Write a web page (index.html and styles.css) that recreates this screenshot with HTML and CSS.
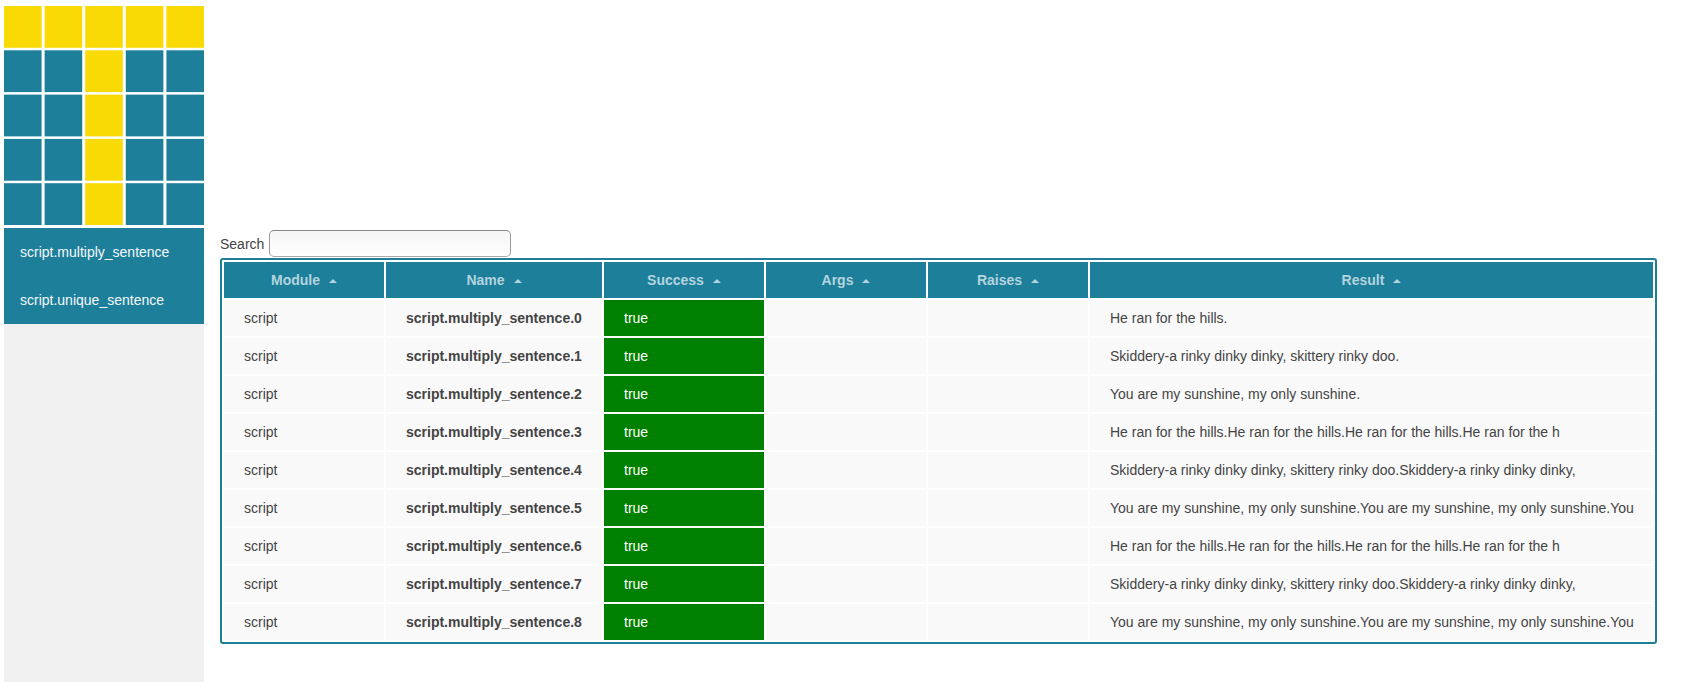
FILE: index.html
```
<!DOCTYPE html>
<html lang="en">
<head>
<meta charset="utf-8">
<title>Test results</title>
<link rel="stylesheet" href="styles.css">
</head>
<body>
<div class="page">
  <aside class="sidebar">
    <svg class="logo" width="200" height="219" viewBox="0 0 200 219" aria-hidden="true">
      <defs>
        <g id="row"><rect width="37.6" height="41.8"/><rect x="40.6" width="37.6" height="41.8"/><rect x="81.2" width="37.6" height="41.8"/><rect x="121.8" width="37.6" height="41.8"/><rect x="162.4" width="37.6" height="41.8"/></g>
        <g id="split"><g class="teal"><rect width="37.6" height="41.8"/><rect x="40.6" width="37.6" height="41.8"/><rect x="121.8" width="37.6" height="41.8"/><rect x="162.4" width="37.6" height="41.8"/></g><rect class="yellow" x="81.2" width="37.6" height="41.8"/></g>
      </defs>
      <use href="#row" class="yellow"/>
      <use href="#split" y="44.3"/>
      <use href="#split" y="88.6"/>
      <use href="#split" y="132.9"/>
      <use href="#split" y="177.2"/>
    </svg>
    <nav class="menu">
      <a class="menu-item">script.multiply_sentence</a>
      <a class="menu-item">script.unique_sentence</a>
    </nav>
  </aside>
  <main class="content">
    <div class="search"><label for="search">Search</label><input class="search-input" id="search" type="text"></div>
    <table class="results">
      <colgroup><col class="c-std"><col class="c-name"><col class="c-std"><col class="c-std"><col class="c-std"><col></colgroup>
      <thead><tr><th>Module</th><th>Name</th><th>Success</th><th>Args</th><th>Raises</th><th>Result</th></tr></thead>
      <tbody>
        <tr><td>script</td><td class="name">script.multiply_sentence.0</td><td class="pass">true</td><td></td><td></td><td>He ran for the hills.</td></tr>
        <tr><td>script</td><td class="name">script.multiply_sentence.1</td><td class="pass">true</td><td></td><td></td><td>Skiddery-a rinky dinky dinky, skittery rinky doo.</td></tr>
        <tr><td>script</td><td class="name">script.multiply_sentence.2</td><td class="pass">true</td><td></td><td></td><td>You are my sunshine, my only sunshine.</td></tr>
        <tr><td>script</td><td class="name">script.multiply_sentence.3</td><td class="pass">true</td><td></td><td></td><td>He ran for the hills.He ran for the hills.He ran for the hills.He ran for the h</td></tr>
        <tr><td>script</td><td class="name">script.multiply_sentence.4</td><td class="pass">true</td><td></td><td></td><td>Skiddery-a rinky dinky dinky, skittery rinky doo.Skiddery-a rinky dinky dinky,</td></tr>
        <tr><td>script</td><td class="name">script.multiply_sentence.5</td><td class="pass">true</td><td></td><td></td><td>You are my sunshine, my only sunshine.You are my sunshine, my only sunshine.You</td></tr>
        <tr><td>script</td><td class="name">script.multiply_sentence.6</td><td class="pass">true</td><td></td><td></td><td>He ran for the hills.He ran for the hills.He ran for the hills.He ran for the h</td></tr>
        <tr><td>script</td><td class="name">script.multiply_sentence.7</td><td class="pass">true</td><td></td><td></td><td>Skiddery-a rinky dinky dinky, skittery rinky doo.Skiddery-a rinky dinky dinky,</td></tr>
        <tr><td>script</td><td class="name">script.multiply_sentence.8</td><td class="pass">true</td><td></td><td></td><td>You are my sunshine, my only sunshine.You are my sunshine, my only sunshine.You</td></tr>
      </tbody>
    </table>
  </main>
</div>
</body>
</html>
```
FILE: styles.css
```
body {
  margin: 0;
  background: #fff;
  color: #444;
  font: 14px/18px "Liberation Sans", Arial, sans-serif;
}
.page {
  display: flex;
  gap: 16px;
  height: 682px;
  padding-left: 4px;
  box-sizing: border-box;
  overflow: hidden;
}
.sidebar {
  display: flex;
  flex-direction: column;
  width: 200px;
  background: linear-gradient(#fff 228px, #f0f0f0 228px);
}
.logo {
  display: block;
  margin: 6px 0 3px;
  flex: none;
}
.yellow { fill: #f9da04; }
.teal { fill: #1e7f9b; }
.menu { background: #1e7f9b; }
.menu-item {
  display: block;
  padding: 15px 16px;
  color: #f4f8fa;
}
.content { padding-top: 230px; }
.search {
  display: flex;
  align-items: center;
  gap: 5px;
  height: 28px;
}
.search-input {
  width: 242px;
  height: 27px;
  margin: 0 0 1px;
  padding: 0 8px;
  box-sizing: border-box;
  border: 1px solid #999;
  border-top-color: #888;
  border-bottom-color: #aaa;
  border-radius: 5px;
  background: linear-gradient(#f5f5f5, #fff);
  font: inherit;
}
.results {
  width: 1437px;
  table-layout: fixed;
  border: 2px solid #1e7f9b;
  border-radius: 3px;
  border-collapse: separate;
  border-spacing: 2px;
}
.c-std { width: 160px; }
.c-name { width: 216px; }
.results th,
.results td {
  height: 36px;
  box-sizing: border-box;
  padding: 0 20px;
  white-space: nowrap;
  text-align: left;
  background: #f9f9f9;
}
.results th {
  text-align: center;
  color: #b2d4de;
  background: #1e7f9b;
}
.results th::after {
  content: "";
  display: inline-block;
  margin-left: 9px;
  vertical-align: 2px;
  border: solid transparent;
  border-width: 0 4px 4px;
  border-bottom-color: #b2d4de;
}
.results .name { font-weight: bold; }
.results .pass {
  color: #fff;
  background: #008000;
}
```
